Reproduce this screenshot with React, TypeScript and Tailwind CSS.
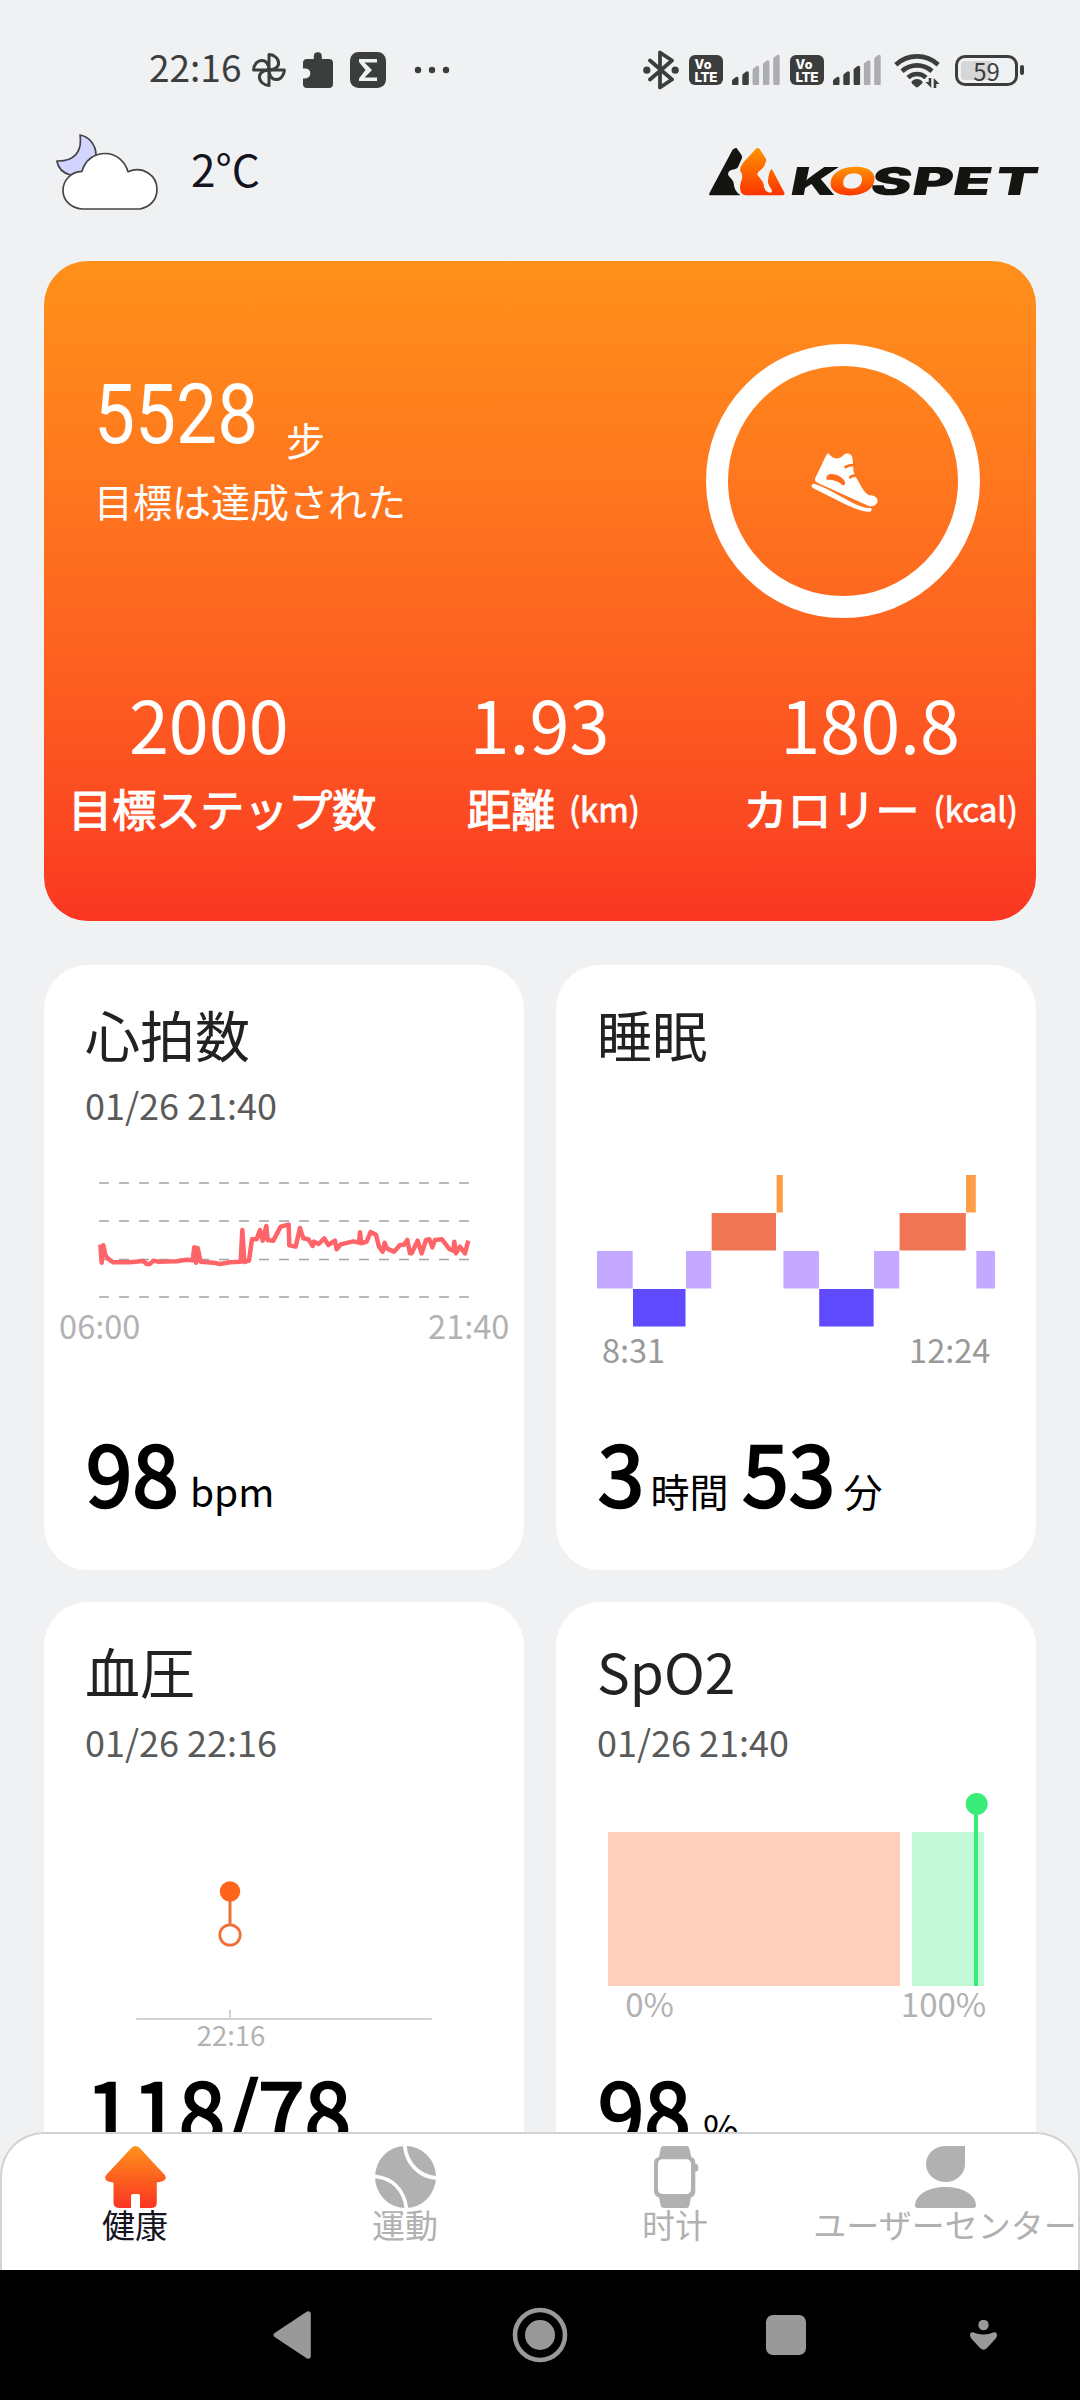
import type { ReactNode } from "react";

type SleepStage = "awake" | "rem" | "light" | "deep";

const STAGE_ROW: Record<SleepStage, number> = { awake: 0, rem: 1, light: 2, deep: 3 };

const STAGE_COLOR: Record<SleepStage, string> = {
  awake: "#ff9d47",
  rem: "#f07555",
  light: "#c5a8ff",
  deep: "#5f4aff",
};

const SLEEP: { stage: SleepStage; x: number; width: number }[] = [
  { stage: "light", x: 41, width: 35.7 },
  { stage: "deep", x: 77, width: 52.5 },
  { stage: "light", x: 130, width: 25.2 },
  { stage: "rem", x: 155.7, width: 64.3 },
  { stage: "awake", x: 220.6, width: 6.2 },
  { stage: "light", x: 227.4, width: 35.5 },
  { stage: "deep", x: 263.2, width: 54.4 },
  { stage: "light", x: 318, width: 25.2 },
  { stage: "rem", x: 343.6, width: 66.2 },
  { stage: "awake", x: 410, width: 9.8 },
  { stage: "light", x: 420.4, width: 18.5 },
];

const HEART_LINE =
  "31,103 35,158 40,106 46,135 55,147 70,157 120,157 160,153 170,162 180,162 190,152 204,155 260,154 290,149 308,151 313,112 318,158 323,114 332,155 370,158 390,162 420,157 452,155 457,60 463,156 477,152 486,88 500,88 510,60 518,92 529,48 533,90 550,92 572,50 596,44 598,106 617,110 630,54 640,85 655,88 668,108 672,95 686,102 703,85 715,105 735,92 740,118 752,103 790,94 807,98 810,67 814,100 830,95 842,66 858,74 867,110 878,125 884,98 890,115 912,125 930,105 942,104 952,90 960,130 965,130 983,92 995,130 1008,90 1018,88 1027,112 1035,90 1056,88 1078,117 1090,122 1093,95 1098,130 1110,110 1125,130 1135,92";

export default function App() {
  return (
    <main
      lang="ja"
      className="flex h-[2400px] w-[1080px] flex-col overflow-hidden bg-[#f0f1f3] font-['Noto_Sans_CJK_JP',sans-serif]"
    >
      <div className="flex h-[2132px] flex-col overflow-hidden">
        <StatusBar />
        <header className="flex h-[133px] shrink-0 items-start pr-[40px] pl-[56px]">
          <WeatherIcon />
          <span className="mt-[16px] ml-[31px] text-[44px] leading-[48px] text-[#14141e]">
            2°C
          </span>
          <KospetLogo />
        </header>
        <StepsCard />
        <section className="mt-[44px] grid grid-cols-2 gap-[32px] px-[44px]">
          <HealthCard title="心拍数" date="01/26 21:40" chart={<HeartChart />}>
            <Value>98</Value>
            <Unit className="ml-[11px]">bpm</Unit>
          </HealthCard>
          <HealthCard title="睡眠" chart={<SleepChart />}>
            <Value>3</Value>
            <Unit className="ml-[6px]">時間</Unit>
            <Value className="ml-[14px]">53</Value>
            <Unit className="ml-[8px]">分</Unit>
          </HealthCard>
          <HealthCard title="血圧" date="01/26 22:16" chart={<PressureChart />}>
            <Value>118/78</Value>
          </HealthCard>
          <HealthCard title="SpO2" date="01/26 21:40" chart={<OxygenChart />}>
            <Value>98</Value>
            <Unit className="ml-[12px]">%</Unit>
          </HealthCard>
        </section>
      </div>
      <TabBar />
      <SystemNav />
    </main>
  );
}

function StatusBar() {
  return (
    <div className="flex h-[128px] shrink-0 items-center pt-3 pr-[56px] pl-[149px] text-[#3c3e3e]">
      <span className="w-[103px] pb-2 text-[37px] leading-[44px]">22:16</span>
      <svg width="34" height="34" viewBox="0 0 34 34" fill="none" stroke="currentColor" strokeWidth="3" strokeLinejoin="round">
        {[0, 90, 180, 270].map((angle) => (
          <path
            key={angle}
            d="M17 17V1.6c5.6.2 9.6 4 9.6 8.6 0 3.800-4 6.800-9.600 6.800"
            transform={`rotate(${angle} 17 17)`}
          />
        ))}
      </svg>
      <svg className="ml-[17px]" width="30" height="36" viewBox="0 0 30 36" fill="currentColor">
        <path d="M4 7h6.800V4.200a4 4 0 0 1 8 0V7H26a4 4 0 0 1 4 4v21a4 4 0 0 1-4 4H4a4 4 0 0 1-4-4v-5.600h2.300a5 5 0 0 0 0-10H0V11a4 4 0 0 1 4-4z" />
      </svg>
      <svg className="ml-[17px]" width="36" height="36" viewBox="0 0 36 36">
        <rect width="36" height="36" rx="8.500" fill="currentColor" />
        <path d="M9 7h18v3.400H14.500L22 18l-7.500 7.600H27V29H9v-2.600l6.500-8.400L9 10z" fill="#f0f1f3" />
      </svg>
      <svg className="ml-[28px]" width="36" height="8" viewBox="0 0 36 8" fill="currentColor">
        <circle cx="4" cy="4" r="3.200" />
        <circle cx="18" cy="4" r="3.200" />
        <circle cx="32" cy="4" r="3.200" />
      </svg>
      <svg className="ml-auto" width="36" height="40" viewBox="0 0 36 40">
        <path
          d="M7 10.500l22 19L17 37.500V2.500L29 10.500 7 29.500"
          fill="none"
          stroke="currentColor"
          strokeWidth="3.800"
          strokeLinejoin="round"
          strokeLinecap="round"
        />
        <circle cx="3.800" cy="20.200" r="3.600" fill="currentColor" />
        <circle cx="32.200" cy="20.200" r="3.600" fill="currentColor" />
      </svg>
      <VolteIcon />
      <SignalIcon level={2} />
      <VolteIcon />
      <SignalIcon level={3} />
      <svg className="ml-[13px]" width="47" height="36" viewBox="0 0 47 36">
        <g fill="none" stroke="currentColor" strokeWidth="4.600">
          <path d="M1.800 12.800a31 31 0 0 1 42.400 0" />
          <path d="M8 19.300a22 22 0 0 1 30 0" />
          <path d="M14 25.600a13 13 0 0 1 18 0" />
        </g>
        <path d="M18 29a7.500 7.500 0 0 1 10 0q1.200 1.200 0 2.400l-3.600 3.400q-1.400 1.200-2.800 0L18 31.400q-1.200-1.200 0-2.400z" fill="currentColor" />
        <path d="M37.300 26v10L31.500 30h3.200v-4zM39.700 36V26l5.800 6h-3.200v4z" fill="currentColor" />
      </svg>
      <div className="ml-[14px] flex h-[31px] w-[63px] items-center justify-center rounded-[10px] border-[3px] border-[#3c3e3e] bg-linear-to-r from-[#d5d6d8] from-58% to-transparent to-58% bg-clip-content p-[3px]">
        <span className="text-[24px] leading-[19px] text-[#3c3e3e]">59</span>
      </div>
      <span className="ml-[2px] h-[10px] w-[4px] rounded-[2px] bg-[#3c3e3e]" />
    </div>
  );
}

function VolteIcon() {
  return (
    <svg className="ml-[10px]" width="34" height="30" viewBox="0 0 34 30">
      <rect width="34" height="30" rx="6" fill="#3c3e3e" />
      <g fill="#fff" fontFamily="Inter, sans-serif" fontWeight="800">
        <text x="5.500" y="13.500" fontSize="12.500" textLength="17">
          Vo
        </text>
        <text x="5.500" y="26.500" fontSize="13.500" textLength="23">
          LTE
        </text>
      </g>
    </svg>
  );
}

function SignalIcon({ level }: { level: number }) {
  return (
    <svg className="ml-[9px]" width="48" height="32" viewBox="0 0 48 32">
      {[0, 1, 2, 3, 4].map((i) => {
        const x = i * 10.3;
        const top = 23 - i * 5.5;
        return (
          <path
            key={i}
            d={`M${x} 30V${top + 4}q0-1 1-1.800L${x + 4} ${top}q2.500-1 2.500 1.500V30q0 1-1 1H${x + 1}q-1 0-1-1z`}
            fill={i < level ? "#3c3e3e" : "#acadaf"}
          />
        );
      })}
    </svg>
  );
}

function WeatherIcon() {
  return (
    <svg className="mt-[5px]" width="104" height="78" viewBox="0 0 104 78" stroke="#444" strokeWidth="1.700" strokeLinejoin="round">
      <path d="M24 2c9 1.500 16 10 16 20L28 38l-13.500 4C7 40 2 35 .9 28 18 28.500 26.500 19 24 2z" fill="#d3d4ff" />
      <path d="M26 76C15 75 7 67.500 7 57.500S15 38.500 26 38.300c3-11 12-17.800 23-17.800s20 7.500 23 18.200c15-6.200 29 3.800 29 17.800 0 9.800-6.500 17.500-17 19.500z" fill="#fff" />
    </svg>
  );
}

function KospetLogo() {
  return (
    <svg className="mt-[19px] ml-auto overflow-visible" width="332" height="49" viewBox="0 0 332 49">
      <defs>
        <linearGradient id="flame" x1="0" y1="0" x2="0" y2="1">
          <stop offset="0" stopColor="#ff9400" />
          <stop offset="1" stopColor="#fd3300" />
        </linearGradient>
        <linearGradient id="flameLetter" gradientUnits="userSpaceOnUse" x1="0" y1="-28" x2="0" y2="0">
          <stop offset="0" stopColor="#ff9400" />
          <stop offset="1" stopColor="#fd3800" />
        </linearGradient>
      </defs>
      <g transform="translate(1 1) scale(.3444 .3333)">
        <path d="M1 136L68 6q4-6 12-6l14 20q4 6 1 12L84 58q-3 5-10 6-16 3-18 10-2 6 2 11 12 12 14 22 1 22 18 33v2H2q-3-2-1-6z" fill="#141411" />
        <path d="M133 6q3-6 8-6 5 0 8 6l15 24q4 8 0 14-2 12-14 22-9 6-10 12 0 4 8 12 12 14 12 28 4 16 20 16 5-2 1-10-9-12-10-22 1-16 4-26 3-12 8-12l36 70q2 6-4 8H106q-16-2-16-24 0-12 6-26 2-14-5-22-2-12 8-26z" fill="url(#flame)" />
      </g>
      <text
        transform="translate(0 47.700) skewX(-11) scale(1.600 1)"
        x="50.500 73.700 100.500 126.500 152 178"
        fontFamily="Inter, sans-serif"
        fontSize="38.500"
        fontWeight="900"
        fill="#141411"
      >
        K<tspan fill="url(#flameLetter)">O</tspan>SPET
      </text>
    </svg>
  );
}

function StepsCard() {
  return (
    <section className="mx-[44px] flex h-[660px] shrink-0 flex-col rounded-[44px] bg-linear-to-b from-[#ff901a] to-[#fa3622] text-white">
      <div className="flex h-[421px] justify-between pr-[56px] pl-[50px]">
        <div className="pt-[112px]">
          <div className="flex items-start">
            <span className="w-[192px] font-[Roboto] text-[83px] leading-[84px]">
              <span className="inline-block origin-left scale-x-[0.880]">5528</span>
            </span>
            <span lang="zh-CN" className="mt-[44px] font-['Noto_Sans_CJK_SC'] text-[39px] leading-[44px]">
              步
            </span>
          </div>
          <p className="mt-[17px] text-[39px] leading-[44px]">目標は達成された</p>
        </div>
        <div className="mt-[83px] flex h-[274px] w-[274px] items-center justify-center rounded-full border-[22px] border-white">
          <ShoeIcon />
        </div>
      </div>
      <div className="grid grid-cols-3 text-center">
        <Stat value="2000" label="目標ステップ数" className="pl-[26px]" />
        <Stat value="1.93" label="距離" unit="(km)" className="pl-[27px]" />
        <Stat value="180.8" label="カロリー" unit="(kcal)" className="pl-[20px]" />
      </div>
    </section>
  );
}

function Stat(props: { value: string; label: string; unit?: string; className: string }) {
  return (
    <div>
      <div className="pr-[1px] text-[72px] leading-[82px]">{props.value}</div>
      <div
        className={`mt-[18px] flex items-center justify-center gap-[14px] whitespace-nowrap [-webkit-text-stroke:1.200px_white] ${props.className}`}
      >
        <span className="text-[44px] leading-[52px]">{props.label}</span>
        {props.unit ? (
          <span className="text-[33px] leading-[52px] [-webkit-text-stroke:0.800px_white]">{props.unit}</span>
        ) : null}
      </div>
    </div>
  );
}

function ShoeIcon() {
  return (
    <svg className="mt-[2px] ml-[2px]" width="67" height="59" viewBox="0 0 200 177">
      <g fill="#fff">
        <path d="M47 3q5-4 9 2c10 14 28 16 42 0 8-6 24-4 26 10l3 40q2 14 12 25c12 22 24 44 36 47 22 0 28 14 22 24-6 10-16 10-26 7L20 90q-11-5-8-14z" />
        <path d="M8 92c52 16 108 58 150 71q10 3 20 1 8 5-1 12C140 178 90 146 5 105q-10-8 3-13z" />
      </g>
      <g fill="none" stroke="#ff701b" strokeWidth="8" strokeLinecap="round">
        <path d="M103 42q10-6 26-6" />
        <path d="M117 73q4-5 14-5" />
      </g>
      <path d="M46 80c-2-10 4-17 14-17 20 0 40 14 42 26q-1 12-10 6C82 84 64 79 46 80z" fill="#ff6c1c" />
    </svg>
  );
}

function HealthCard(props: {
  title: string;
  date?: string;
  chart: ReactNode;
  children: ReactNode;
}) {
  return (
    <article className="h-[605px] rounded-[44px] bg-white pt-[38px]">
      <h2 className="px-[41px] text-[55px] leading-[60px] text-[#222]">{props.title}</h2>
      <p className="mt-[21px] h-[41px] px-[41px] text-[36px] leading-[40px] text-[#5a5a5a]">
        {props.date}
      </p>
      {props.chart}
      <div className="flex items-baseline px-[42px] leading-[90px] text-black">{props.children}</div>
    </article>
  );
}

function Value({ className = "", children }: { className?: string; children: ReactNode }) {
  return (
    <span className={`text-[83px] tracking-[0.400px] [-webkit-text-stroke:2.600px_black] ${className}`}>
      {children}
    </span>
  );
}

function Unit({ className = "", children }: { className?: string; children: ReactNode }) {
  return <span className={`text-[39px] ${className}`}>{children}</span>;
}

function Chart({ children }: { children: ReactNode }) {
  return (
    <svg width="480" height="301" viewBox="0 0 480 301" className="block" fontSize="32.500" textAnchor="middle">
      {children}
    </svg>
  );
}

function HeartChart() {
  return (
    <Chart>
      {[58, 96, 134.5, 172].map((y) => (
        <path key={y} d={`M55 ${y}H425`} stroke="#a3a3a3" strokeWidth="1.300" strokeDasharray="10 10" />
      ))}
      <polyline
        points={HEART_LINE}
        transform="translate(46 85) scale(.3333)"
        fill="none"
        stroke="#ff6468"
        strokeWidth="13.500"
        strokeLinejoin="round"
      />
      <text x="55.700" y="214" fill="#b2b2b2">06:00</text>
      <text x="424.700" y="214" fill="#b2b2b2">21:40</text>
    </Chart>
  );
}

function SleepChart() {
  return (
    <Chart>
      {SLEEP.map((block) => (
        <rect
          key={block.x}
          x={block.x}
          y={50 + STAGE_ROW[block.stage] * 38}
          width={block.width}
          height="37.500"
          fill={STAGE_COLOR[block.stage]}
        />
      ))}
      <text x="77.500" y="238" fill="#999">8:31</text>
      <text x="393.700" y="238" fill="#999">12:24</text>
    </Chart>
  );
}

function PressureChart() {
  return (
    <Chart>
      <path d="M186 130V163" stroke="#ee7038" strokeWidth="3" />
      <circle cx="186" cy="129.500" r="10.200" fill="#ff641c" />
      <circle cx="186" cy="173" r="10.200" fill="#fff" stroke="#ee7038" strokeWidth="2.800" />
      <path d="M92.300 257H387.700" stroke="#d2d2d2" strokeWidth="2" />
      <path d="M186 248V257" stroke="#d2d2d2" strokeWidth="2" />
      <text x="187" y="284" fontSize="27.500" fill="#b2b2b2">22:16</text>
    </Chart>
  );
}

function OxygenChart() {
  return (
    <Chart>
      <rect x="52" y="70" width="292" height="154" fill="#fdcfbc" />
      <rect x="356" y="70" width="72" height="154" fill="#c4f9d8" />
      <path d="M420 42V224" stroke="#3aec78" strokeWidth="4" />
      <circle cx="420.700" cy="42" r="11" fill="#3aec78" />
      <text x="93.500" y="255" fontSize="33" fill="#b2b2b2">0%</text>
      <text x="387.500" y="255" fontSize="33" fill="#b2b2b2">100%</text>
    </Chart>
  );
}

function TabBar() {
  return (
    <nav className="h-[138px] shrink-0 rounded-t-[44px] border-2 border-b-0 border-[#d2d2d2] bg-white">
      <div className="-mx-[2px] grid grid-cols-4">
        <Tab label="健康" active>
          <svg width="61" height="62" viewBox="0 0 61 62">
            <defs>
              <linearGradient id="home" x1="0" y1="0" x2="0" y2="1">
                <stop offset="0" stopColor="#ff921a" />
                <stop offset="1" stopColor="#fb3423" />
              </linearGradient>
            </defs>
            <path
              d="M26.800 1.600q3.700-3.200 7.400 0l25.400 27.200q2.200 3 .2 5-2 2-8 2.800v20q0 5.400-5.200 5.400H35V50q0-2-2-2h-5q-2 0-2 2v12H14q-5.500 0-5.500-5.400v-20Q2 35.800.8 33.800q-1.600-2.400.6-5z"
              fill="url(#home)"
            />
          </svg>
        </Tab>
        <Tab label="運動">
          <svg width="61" height="62" viewBox="0 0 61 62">
            <ellipse cx="30.500" cy="31" rx="30.500" ry="31" fill="#b1b1b1" />
            <path d="M29.700-1C31 17 44 31 62 32M-1 30.300C17 32 29 43 31.500 63" fill="none" stroke="#fff" strokeWidth="3.700" />
          </svg>
        </Tab>
        <Tab label="时计" lang="zh-CN">
          <svg className="ml-[3px]" width="45" height="62" viewBox="0 0 45 62">
            <path
              d="M10 0h22q3 0 3.500 3l1.800 8q4 1 4 6v1h1q2 .4 2 2.500v2.500q0 2-2 2.500h-1V45q0 5-4.300 6.500l-1.500 7.500q-.5 3-3.500 3H10q-3 0-3.500-3L5 51.500Q0 50 0 45V17q0-5 5-6l1.500-8Q7 0 10 0z"
              fill="#b1b1b1"
            />
            <rect x="4" y="13.300" width="33" height="34.700" rx="4.500" fill="#fff" />
          </svg>
        </Tab>
        <Tab label="ユーザーセンター">
          <svg width="61" height="62" viewBox="0 0 61 62" fill="#b1b1b1">
            <path d="M30.500 0H50V18A19.500 18 0 1 1 30.500 0z" />
            <path d="M2.500 62Q0 62 0 59C1 48 14 41 30.500 41S60 48 61 59q0 3-2.500 3z" />
          </svg>
        </Tab>
      </div>
    </nav>
  );
}

function Tab(props: { label: string; active?: boolean; lang?: string; children: ReactNode }) {
  return (
    <div className="flex min-w-0 flex-col items-center pt-[12px]">
      {props.children}
      <span
        lang={props.lang}
        className={`text-[33px] leading-[32px] whitespace-nowrap ${
          props.active ? "text-[#14141e]" : "text-[#b1b1b1]"
        }`}
      >
        {props.label}
      </span>
    </div>
  );
}

function SystemNav() {
  return (
    <div className="flex h-[130px] shrink-0 items-center bg-black pl-[273px] text-[#999]">
      <svg width="38" height="48" viewBox="0 0 38 48" fill="currentColor">
        <path d="M34 .6q3.800-1.200 3.800 3v40.800q0 4.200-3.800 3L1.600 26q-2.400-2 0-4z" />
      </svg>
      <svg className="ml-[201px]" width="56" height="56" viewBox="0 0 56 56">
        <circle cx="28" cy="28" r="25" fill="none" stroke="currentColor" strokeWidth="4.600" />
        <circle cx="28" cy="28" r="15" fill="currentColor" />
      </svg>
      <span className="ml-[198px] h-[40px] w-[40px] rounded-[7px] bg-[#999]" />
      <svg className="ml-[164px]" width="28" height="30" viewBox="0 0 28 30" fill="currentColor">
        <circle cx="13.500" cy="5" r="5.200" />
        <path d="M3 12.300q10.500 4.400 21 0 3-.6 3 2.400 0 2-1.500 4L17 28q-3.500 3.400-7 0L1.500 18.700Q0 17 0 14.700q0-3 3-2.400z" />
      </svg>
    </div>
  );
}
